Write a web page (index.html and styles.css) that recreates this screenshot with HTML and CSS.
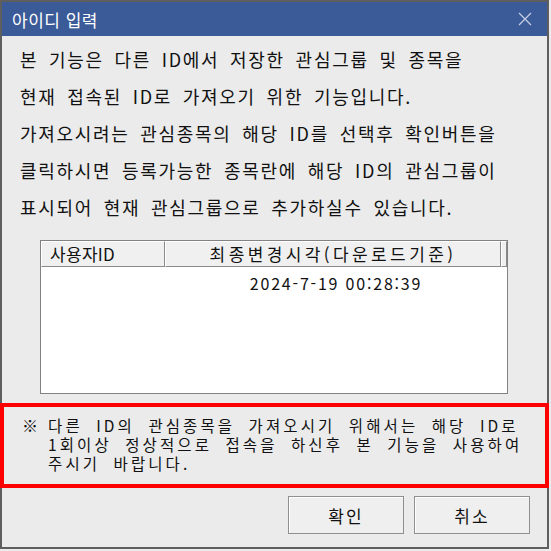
FILE: index.html
```html
<!DOCTYPE html>
<html lang="ko">
<head>
  <meta charset="UTF-8" />
  <title>아이디 입력</title>
  <link rel="stylesheet" href="styles.css">
</head>
<body>

<div class="dialog">
  <div class="titlebar">
    <span class="title">아이디 입력</span>
    <svg class="close" width="14" height="14" viewBox="0 0 14 14">
      <path d="M1 1 L13 13 M13 1 L1 13" stroke="#c4cde3" stroke-width="1.3" fill="none"/>
    </svg>
  </div>

  <div class="content">
    <div class="intro">
      <p>본 기능은 다른 ID에서 저장한 관심그룹 및 종목을</p>
      <p>현재 접속된 ID로 가져오기 위한 기능입니다.</p>
      <p>가져오시려는 관심종목의 해당 ID를 선택후 확인버튼을</p>
      <p>클릭하시면 등록가능한 종목란에 해당 ID의 관심그룹이</p>
      <p>표시되어 현재 관심그룹으로 추가하실수 있습니다.</p>
    </div>

    <div class="list">
      <div class="list-head">
        <div class="head-cell col-user">사용자ID</div>
        <div class="head-cell col-time">최종변경시각(다운로드기준)</div>
        <div class="head-cell col-rest"></div>
      </div>
      <div class="list-row">
        <div class="cell col-user"></div>
        <div class="cell col-time">2024-7-19 00:28:39</div>
      </div>
    </div>

    <div class="notice">
      <span class="mark">※</span>
      <div class="notice-text">
        <p>다른 ID의 관심종목을 가져오시기 위해서는 해당 ID로</p>
        <p>1회이상 정상적으로 접속을 하신후 본 기능을 사용하여</p>
        <p>주시기 바랍니다.</p>
      </div>
    </div>

    <div class="buttons">
      <button class="btn">확인</button>
      <button class="btn">취소</button>
    </div>
  </div>
</div>

</body>
</html>
```

FILE: styles.css
```css
body {
  margin: 0;
  background: #ececec;
  font-family: "Noto Sans CJK KR", "DejaVu Sans", sans-serif;
  color: #111;
}

.dialog {
  width: 549px;
  height: 549px;
  box-sizing: border-box;
  border: 2px solid #5e5e5e;
  background: #ebebeb;
  display: flex;
  flex-direction: column;
}

.titlebar {
  height: 34px;
  background: #3b5a98;
  display: flex;
  align-items: center;
  justify-content: space-between;
  padding: 0 15px 0 10px;
}

.title {
  color: #fff;
  font-size: 17px;
  letter-spacing: 0.5px;
}

.content {
  flex: 1;
  display: flex;
  flex-direction: column;
}

.intro {
  margin-top: 5px;
  padding-left: 18px;
}

.intro p {
  margin: 0;
  height: 37px;
  line-height: 37px;
  font-size: 18px;
  letter-spacing: 1.7px;
  word-spacing: 4px;
  white-space: nowrap;
}

/* user list */
.list {
  margin: 14px 0 0 38px;
  width: 468px;
  height: 154px;
  box-sizing: border-box;
  border: 1px solid #828282;
  background: #fff;
}

.list-head {
  display: flex;
  height: 26px;
}

.head-cell {
  box-sizing: border-box;
  height: 26px;
  line-height: 23px;
  font-size: 17px;
  letter-spacing: 3.4px;
  white-space: nowrap;
  background: #f0f0f0;
  border-top: 1px solid #fff;
  border-left: 1px solid #fff;
  border-right: 1px solid #8a8a8a;
  border-bottom: 1px solid #8a8a8a;
}

.col-user {
  width: 124px;
  padding-left: 8px;
}

.head-cell.col-user {
  letter-spacing: 0.3px;
}

.col-time {
  width: 336px;
  text-align: center;
}

.col-rest {
  flex: 1;
}

.list-row {
  display: flex;
  height: 32px;
  line-height: 32px;
}

.cell {
  box-sizing: border-box;
  font-size: 16px;
  letter-spacing: 1.8px;
}

.cell.col-time {
  padding-left: 6px;
}

/* notice */
.notice {
  margin: 9px -2px 0 -2px;
  height: 85px;
  box-sizing: border-box;
  border: 4px solid #ff0000;
  padding: 9px 0 0 18px;
  display: flex;
  gap: 10px;
}

.mark {
  font-size: 16px;
  line-height: 19px;
}

.notice-text p {
  margin: 0;
  height: 19px;
  font-size: 15.5px;
  line-height: 19px;
  letter-spacing: 3.1px;
  word-spacing: 6px;
  white-space: nowrap;
}

/* buttons */
.buttons {
  display: flex;
  justify-content: flex-end;
  gap: 10px;
  margin-top: 8px;
  padding-right: 17px;
}

.btn {
  width: 116px;
  height: 38px;
  font-family: inherit;
  font-size: 17px;
  letter-spacing: 2px;
  color: #111;
  background: #efefef;
  border: 1px solid #8f8f8f;
  box-shadow: inset 1px 1px 0 #fff;
  padding: 0;
}
```
